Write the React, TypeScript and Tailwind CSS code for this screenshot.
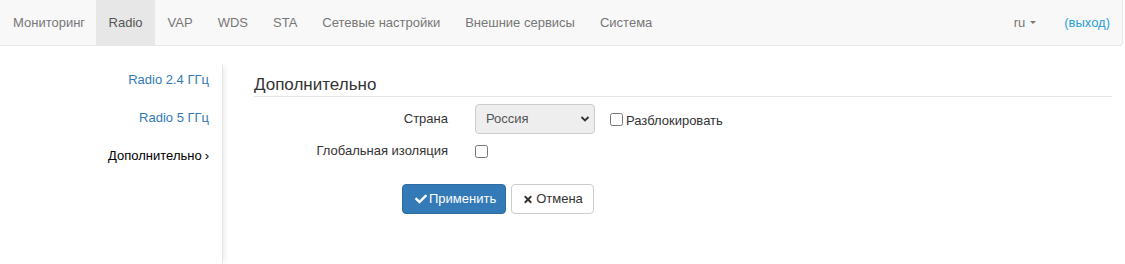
import { FaCheck, FaTimes } from 'react-icons/fa';

const NAV_ITEMS = ['Мониторинг', 'Radio', 'VAP', 'WDS', 'STA', 'Сетевые настройки', 'Внешние сервисы', 'Система'];

const SIDE_ITEMS = [
  { label: 'Radio 2.4 ГГц', active: false },
  { label: 'Radio 5 ГГц', active: false },
  { label: 'Дополнительно', active: true },
];

export default function App() {
  return (
    <div
      className="w-[1125px] h-[264px] bg-white text-[13px] text-[#333] overflow-hidden"
      style={{ fontFamily: '"Liberation Sans", Arial, sans-serif' }}
    >
      {/* top navbar */}
      <div className="w-[1123px] h-[46px] bg-[#f8f8f8] border-r border-b border-[#e7e7e7] rounded-br-[4px] flex items-stretch">
        <ul className="flex items-stretch">
          {NAV_ITEMS.map((item) => (
            <li
              key={item}
              className={`flex items-center px-[12.5px] first:pl-[13px] first:pr-[11px] leading-[18px] ${
                item === 'Radio' ? 'bg-[#e7e7e7] text-[#555]' : 'text-[#777]'
              }`}
            >
              {item}
            </li>
          ))}
        </ul>
        <div className="ml-auto flex items-center pr-[12px]">
          <span className="flex items-center text-[#777]">
            ru
            <span className="ml-[5px] inline-block w-0 h-0 border-l-[3px] border-r-[3px] border-t-[3px] border-l-transparent border-r-transparent border-t-[#777]" />
          </span>
          <span className="ml-[28px] text-[#2a9fdb]">(выход)</span>
        </div>
      </div>

      <div className="flex">
        {/* side menu */}
        <div className="w-[223px] mt-[18px] h-[200px] border-r border-[#e5e5e5] shadow-[5px_0_5px_-3px_rgba(0,0,0,0.08)]">
          <ul className="pt-[7px] pr-[13px] text-right">
            {SIDE_ITEMS.map((s) => (
              <li
                key={s.label}
                className={`leading-[18px] mb-[20px] ${s.active ? 'text-black' : 'text-[#337ab7]'}`}
              >
                {s.label}
                {s.active && <span className="ml-[3px]">›</span>}
              </li>
            ))}
          </ul>
        </div>

        {/* content */}
        <div className="flex-1 pl-[31px] pr-[13px] pt-[29px]">
          <div className="text-[17px] leading-[20px] pb-[1px] border-b border-[#e5e5e5] text-[#333]">
            Дополнительно
          </div>

          <div className="mt-[7px] flex items-center h-[30px]">
            <label className="w-[194px] text-right">Страна</label>
            <div className="relative ml-[27px] w-[120px] h-[30px]">
              <select
                disabled
                defaultValue="ru"
                className="appearance-none w-full h-full bg-[#eeeeee] border border-[#ccc] rounded-[4px] pl-[10px] text-[#555] text-[13px] opacity-100"
              >
                <option value="ru">Россия</option>
              </select>
              <svg
                className="absolute right-[5px] top-[11px] pointer-events-none"
                width="10"
                height="8"
                viewBox="0 0 10 8"
              >
                <path d="M1.5 2 L5 5.5 L8.5 2" fill="none" stroke="#333" strokeWidth="1.8" />
              </svg>
            </div>
            <label className="ml-[15px] flex items-center">
              <input type="checkbox" className="w-[13px] h-[13px] m-0" />
              <span className="ml-[3px] leading-[18px] mt-[3px]">Разблокировать</span>
            </label>
          </div>

          <div className="mt-[7px] flex items-center h-[20px]">
            <label className="w-[194px] text-right">Глобальная изоляция</label>
            <input type="checkbox" className="ml-[27px] w-[13px] h-[13px] m-0" />
          </div>

          <div className="mt-[23px] ml-[148px] flex gap-[5px]">
            <button className="h-[30px] pl-[12px] pr-[9px] flex items-center gap-[2px] bg-[#337ab7] border border-[#2e6da4] rounded-[4px] text-white text-[13px]">
              <FaCheck className="w-[12px] h-[12px]" />
              Применить
            </button>
            <button className="h-[30px] pl-[11px] pr-[10px] flex items-center gap-[3px] bg-white border border-[#ccc] rounded-[4px] text-[#333] text-[13px]">
              <FaTimes className="w-[10px] h-[11px]" />
              Отмена
            </button>
          </div>
        </div>
      </div>
    </div>
  );
}
